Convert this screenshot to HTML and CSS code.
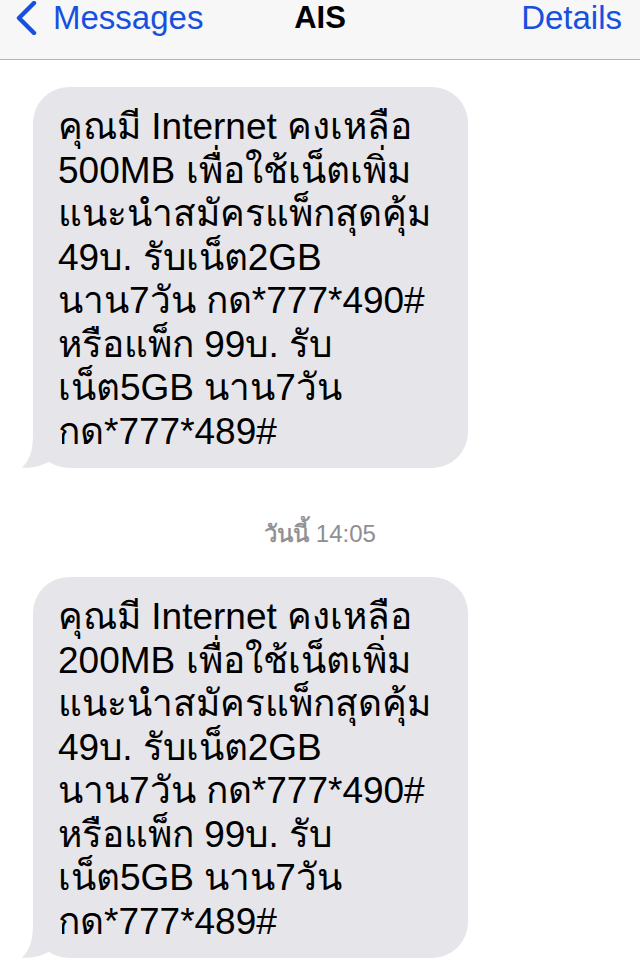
FILE: index.html
```html
<!DOCTYPE html>
<html lang="th">

<head>
  <meta charset="UTF-8">
  <meta name="viewport" content="width=device-width, initial-scale=1.0">
  <title>AIS</title>
  <link rel="stylesheet" href="styles.css">
</head>

<body>
  <!-- Barre de navigation -->
  <header class="nav">
    <div class="nav-row">
      <a class="back" href="#">
        <svg class="chevron" width="24" height="34" viewBox="0 0 24 34">
          <path d="M20 2 L5 17 L20 32" fill="none" stroke="currentColor" stroke-width="4.4" stroke-linecap="round" stroke-linejoin="round" />
        </svg>
        <span>Messages</span>
      </a>
      <div class="title">AIS</div>
      <a class="details" href="#">Details</a>
    </div>
  </header>

  <main class="thread">
    <div class="bubble">
      คุณมี Internet คงเหลือ<br>
      500MB เพื่อใช้เน็ตเพิ่ม<br>
      แนะนำสมัครแพ็กสุดคุ้ม<br>
      49บ. รับเน็ต2GB<br>
      นาน7วัน กด*777*490#<br>
      หรือแพ็ก 99บ. รับ<br>
      เน็ต5GB นาน7วัน<br>
      กด*777*489#
      <svg class="tail" width="40" height="34" viewBox="0 0 40 34">
        <path d="M11 0 C11 16 8 26 0 33.5 C10 34.5 20 32 28 27 C31 29 35 31 40 32 L40 0 Z" />
      </svg>
    </div>

    <div class="stamp"><span class="day">วันนี้</span> 14:05</div>

    <div class="bubble">
      คุณมี Internet คงเหลือ<br>
      200MB เพื่อใช้เน็ตเพิ่ม<br>
      แนะนำสมัครแพ็กสุดคุ้ม<br>
      49บ. รับเน็ต2GB<br>
      นาน7วัน กด*777*490#<br>
      หรือแพ็ก 99บ. รับ<br>
      เน็ต5GB นาน7วัน<br>
      กด*777*489#
      <svg class="tail" width="40" height="34" viewBox="0 0 40 34">
        <path d="M11 0 C11 16 8 26 0 33.5 C10 34.5 20 32 28 27 C31 29 35 31 40 32 L40 0 Z" />
      </svg>
    </div>
  </main>
</body>

</html>
```

FILE: styles.css
```css
body {
  font-family: "Liberation Sans", "Noto Sans", sans-serif;
  margin: 0;
  padding: 0;
  background-color: #fff;
  color: #000;
}

.nav {
  height: 60px;
  background: #f7f7f7;
  border-bottom: 1px solid #b4b4b4;
  box-sizing: border-box;
}

.nav-row {
  display: flex;
  align-items: center;
  justify-content: space-between;
  height: 36px;
  padding: 0 18px 0 14px;
  position: relative;
}

.back,
.details {
  color: #1650df;
  text-decoration: none;
  font-size: 33px;
}

.back {
  display: flex;
  align-items: center;
  gap: 15px;
}

.chevron {
  display: block;
}

.title {
  position: absolute;
  left: 0;
  right: 0;
  text-align: center;
  font-size: 31px;
  font-weight: bold;
  pointer-events: none;
}

.thread {
  padding: 27px 0 20px 33px;
}

.bubble {
  position: relative;
  width: 435px;
  box-sizing: border-box;
  padding: 18px 6px 15px 25px;
  background: #e5e5ea;
  border-radius: 36px;
  font-size: 37px;
  line-height: 43.5px;
}

.tail {
  position: absolute;
  left: -11px;
  bottom: 0;
  fill: #e5e5ea;
}

.stamp {
  margin: 51px 0 28px -33px;
  text-align: center;
  font-size: 24px;
  line-height: 30px;
  color: #8e8e93;
}

.stamp .day {
  -webkit-text-stroke: 0.5px #8e8e93;
}
```
